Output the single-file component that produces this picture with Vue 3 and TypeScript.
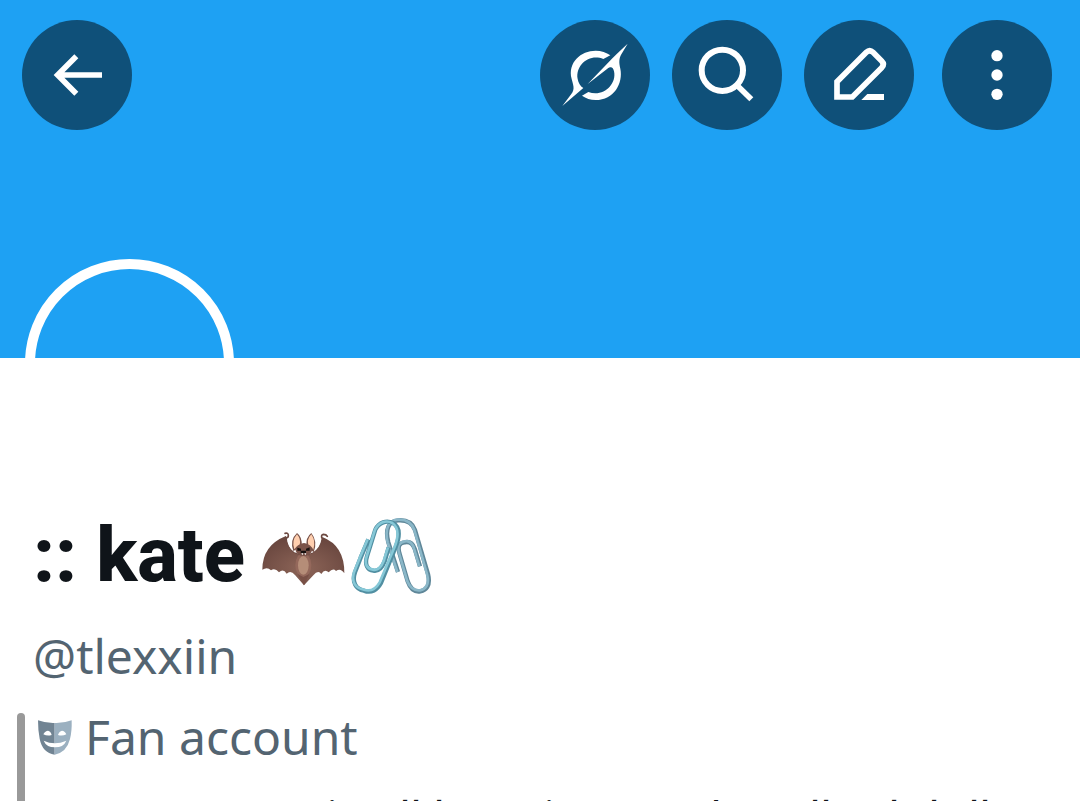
<script setup lang="ts">
interface Glyph {
  char: string
  x: number
  y: number
}

const name = ':: kate'
const handle = '@tlexxiin'
const accountType = 'Fan account'

const line = (char: string, x: number, y = 37): Glyph => ({ char, x, y })
const bioLine: Glyph[] = [
  line('i', 332, 36), line('l', 405), line('l', 416), line('l', 439), line('i', 549, 36),
  line('/', 710, 35), line('l', 815), line('l', 826), line('l', 894), line('l', 934),
  line('l', 974), line('l', 985),
]
</script>

<template>
  <main class="profile">
    <header class="banner">
      <nav class="toolbar">
        <button class="round back" type="button" aria-label="Back">
          <svg viewBox="126 120 210 210" class="icon">
            <path d="M306 225H172M229 169L173 225L229 281" fill="none" stroke="#fff" stroke-width="17" />
          </svg>
        </button>
        <button class="round" type="button" aria-label="Grok">
          <svg viewBox="90 90 210 210" class="icon" fill="#fff">
            <path d="M173 222L240 152Q254 137 293 101L275 131C266 146 267 158 271 176C280 220 252 270 197 270C181 270 168 265 156 257L175 246C218 263 261 224 252 184C249 171 243 169 232 176Z" />
            <path d="M97 288L124 252C136 237 129 224 125 207C112 157 153 122 197 122C214 122 229 127 241 136L220 147C177 130 136 166 143 207C145 218 151 229 160 234Z" />
          </svg>
        </button>
        <button class="round" type="button" aria-label="Search">
          <svg viewBox="486 90 210 210" class="icon" fill="none" stroke="#fff" stroke-width="18">
            <circle cx="577" cy="181" r="62" />
            <path d="M620 225L664 268" stroke-width="17" />
          </svg>
        </button>
        <button class="round" type="button" aria-label="Edit">
          <svg viewBox="102 90 210 210" class="icon">
            <path d="M141 261V215L229 127Q239 117 249 127L275 153Q285 163 275 173L187 261Z" fill="none" stroke="#fff" stroke-width="17" />
            <path d="M214 270L232 252H282V270Z" fill="#fff" />
          </svg>
        </button>
        <button class="round more" type="button" aria-label="More options">
          <svg viewBox="516 90 210 210" class="icon" fill="#fff">
            <circle cx="621" cy="137" r="17" />
            <circle cx="621" cy="195" r="17" />
            <circle cx="621" cy="253" r="17" />
          </svg>
        </button>
      </nav>
      <div class="avatar"></div>
    </header>

    <section class="details">
      <h1 class="name">
        <span>{{ name }}</span>
        <svg class="bat" viewBox="30 75 255 171" role="img" aria-label="Bat">
          <defs>
            <radialGradient id="wing" cx="50%" cy="65%" r="60%">
              <stop offset="0" stop-color="#8d6558" />
              <stop offset="1" stop-color="#6b4840" />
            </radialGradient>
          </defs>
          <path d="M102 85Q112 82 112 92Q112 98 105 98Q106 128 128 143Q157 158 186 145Q210 130 214 102Q208 90 217 88Q226 88 229 94" fill="none" stroke="#6b4840" stroke-width="5" stroke-linecap="round" />
          <path d="M105 97Q110 128 128 143Q157 158 186 145Q210 130 214 96Q281 122 280 205Q269 188 255 198Q246 188 233 202Q221 190 211 207Q201 194 187 211L159 241L132 210Q119 194 107 206Q97 190 84 202Q72 188 60 196Q49 184 34 194Q34 121 105 93Z" fill="url(#wing)" />
          <ellipse cx="157" cy="180" rx="24" ry="36" fill="#94685b" />
          <ellipse cx="157" cy="181" rx="16" ry="28" fill="#b58d78" />
          <path d="M140 207L157 216L175 207L159 241Z" fill="#795046" />
          <path d="M127 138Q115 105 138 84Q155 96 152 125M167 125Q163 97 181 84Q201 109 188 142" fill="#79534a" />
          <path d="M130 133Q121 107 138 88Q151 103 146 120Q136 122 130 133ZM172 121Q167 103 181 88Q195 108 187 134Q182 123 172 121Z" fill="#ffcfaf" />
          <path d="M134 137Q138 116 159 114Q180 116 183 137Q178 152 158 153Q138 152 134 137Z" fill="#795248" />
          <path d="M139 128L150 131V137L139 137ZM165 131L176 127V137L165 137ZM149 137H165V145H149Z" fill="#17110f" />
          <path d="M151 145L154 151L157 145ZM160 145L163 151L166 145Z" fill="#fff" />
        </svg>
        <svg class="clips" viewBox="300 36 246 234" role="img" aria-label="Linked paperclips">
          <g fill="none" stroke-linecap="butt" stroke-linejoin="round">
            <path d="M441 201L412 112C402 74 412 48 441 46C468 44 484 53 492 75L531 207C540 244 524 256 508 259C489 262 477 249 470 229L446 147C438 122 447 113 461 112C478 108 486 117 491 131L507 184" stroke="#5f8799" stroke-width="13" />
            <path d="M439 201L410 112C401 74 411 46 440 44C467 42 482 52 490 75L528 207C537 241 522 253 507 256C488 258 476 246 469 229L445 147C437 121 447 111 461 109C477 106 485 116 489 131L505 184" stroke="#8ab7c8" stroke-width="8" />
            <path d="M352 103L329 158L312 202C302 230 314 253 339 257C361 266 379 254 390 234L434 126C449 88 445 65 426 54C407 45 384 51 373 74L348 154C340 180 350 195 367 197C382 200 393 190 401 169L413 127" stroke="#518fa2" stroke-width="13" />
            <path d="M350 103L327 157L309 202C300 229 313 250 339 254C360 261 375 251 386 232L431 125C445 89 441 66 424 54C405 44 384 51 372 74L347 154C339 178 349 192 366 194C380 197 390 188 398 168L411 127" stroke="#86c8d7" stroke-width="8" />
          </g>
        </svg>
      </h1>
      <p class="handle">{{ handle }}</p>
      <div class="about">
        <p class="account">
          <svg class="mask" viewBox="112 296 108 111" aria-hidden="true">
            <path d="M115 300Q139 309 165 308V403Q128 397 120 355Q115 331 115 300Z" fill="#718493" />
            <path d="M165 308Q193 309 216 300Q217 333 211 356Q201 396 165 403Z" fill="#9bb0c0" />
            <path d="M131 342Q137 331 145 331Q153 332 156 344Q143 348 131 342ZM175 344Q179 332 187 331Q195 331 200 342Q188 348 175 344ZM132 361Q165 376 200 361Q192 381 166 381Q140 381 132 361Z" fill="#fff" />
          </svg>
          <span>{{ accountType }}</span>
        </p>
        <svg class="bio" height="50">
          <text v-for="glyph in bioLine" :key="glyph.x" :x="glyph.x" :y="glyph.y" text-anchor="middle">{{ glyph.char }}</text>
        </svg>
      </div>
    </section>
  </main>
</template>

<style>
body {
  margin: 0;
  background: #fff;
}
</style>

<style scoped>
.profile {
  height: 100vh;
  overflow: hidden;
  background: #fff;
  color: #0f1419;
  font-family: "Noto Sans", sans-serif;
}

.banner {
  position: relative;
  box-sizing: border-box;
  height: 358px;
  padding: 20px 28px 0 22px;
  overflow: hidden;
  background: #1ea1f3;
}

.toolbar {
  display: flex;
  gap: 22px;
}

.round {
  display: grid;
  place-items: center;
  flex: none;
  width: 110px;
  height: 110px;
  padding: 0;
  border: 0;
  border-radius: 50%;
  background: #0f5079;
  cursor: pointer;
}

.back {
  margin-right: auto;
}

.more {
  margin-left: 6px;
}

.icon {
  display: block;
  width: 70px;
  height: 70px;
}

.avatar {
  position: absolute;
  top: 259px;
  left: 25px;
  box-sizing: border-box;
  width: 209px;
  height: 209px;
  border: 10px solid #fff;
  border-radius: 50%;
}

.details {
  padding-top: 152px;
}

.name {
  display: flex;
  align-items: center;
  margin: 0;
  padding-left: 33px;
  font: 800 76px/90px Roboto, sans-serif;
}

.bat {
  width: 85px;
  height: 57px;
  margin: 6px 5px 0 16px;
}

.clips {
  width: 82px;
  height: 78px;
  margin-top: 2px;
}

.handle {
  margin: 24px 0 16px;
  padding-left: 33px;
  color: #536471;
  font-size: 48px;
  line-height: 64px;
}

.about {
  position: relative;
}

.about::before {
  content: "";
  position: absolute;
  top: 9px;
  bottom: 0;
  left: 17px;
  width: 8px;
  border-radius: 4px;
  background: #999;
}

.account {
  display: flex;
  align-items: center;
  gap: 12px;
  margin: 0;
  padding-left: 37px;
  color: #536471;
  font-size: 48px;
  line-height: 66px;
}

.mask {
  width: 36px;
  height: 37px;
}

.bio {
  display: block;
  width: 100%;
  margin-top: 29px;
  fill: #0f1419;
  font-size: 47px;
}
</style>
